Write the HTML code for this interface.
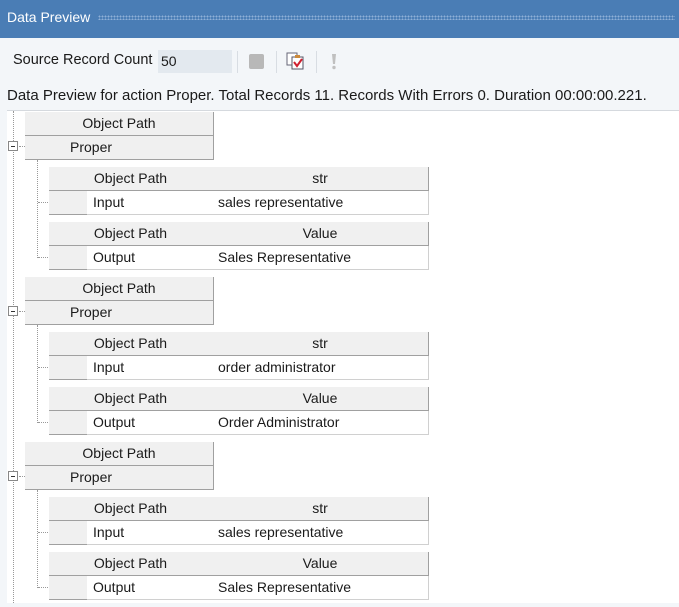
<!DOCTYPE html>
<html><head><style>
*{margin:0;padding:0;box-sizing:border-box}
body{width:679px;height:603px;overflow:hidden;background:#f3f6f9;font-family:"Segoe UI","Liberation Sans",sans-serif;font-size:14px;color:#1a1a1a;position:relative}
.a{position:absolute}
.title{left:0;top:0;width:679px;height:38px;background:#4a7db5}
.title span{position:absolute;left:7px;top:9px;color:#fff;font-size:14px}
.dots{position:absolute;left:98px;right:4px;top:15px;height:5px;background-image:radial-gradient(circle,#8fb0d6 0.8px,transparent 1px);background-size:3px 3px}
.content{left:7px;top:110px;width:672px;height:493px;background:#fff;border-top:1px solid #d5d9de}
.cell{position:absolute;background:#f0f0f0;border-right:1px solid #a0a0a0;border-bottom:1px solid #a0a0a0;font-size:14px;line-height:22px;white-space:nowrap}
.hd{text-align:center}
.w{background:#fff;border-right:1px solid #d0d0d0;border-bottom:1px solid #d0d0d0;padding-left:6px}
.vd{position:absolute;width:1px;border-left:1px dotted #999}
.hdl{position:absolute;height:1px;border-top:1px dotted #999}
.box{position:absolute;width:10px;height:10px;border:1px solid #888;background:#fff}
.box:after{content:"";position:absolute;left:2px;top:4px;width:4px;height:1px;background:#333}
</style></head><body>
<div class="a title"><span>Data Preview</span><div class="dots"></div></div>
<div class="a" style="left:13px;top:52px;font-size:14.5px">Source Record Count</div>
<div class="a" style="left:158px;top:50px;width:74px;height:23px;background:#e3e9ef;padding:3px 3px;font-size:14px">50</div>
<div class="a" style="left:237px;top:51px;width:1px;height:22px;background:#d8dde3"></div>
<div class="a" style="left:249px;top:54px;width:15px;height:15px;background:#b8b8b8;border-radius:2px"></div>
<div class="a" style="left:276px;top:51px;width:1px;height:22px;background:#d8dde3"></div>
<svg class="a" style="left:286px;top:52px" width="22" height="20"><rect x="1" y="1" width="10" height="12" fill="#fff" stroke="#667"/><rect x="6" y="5" width="11" height="12" fill="#fff" stroke="#556"/><rect x="9" y="3" width="5" height="3" fill="#cc8a3a"/><path d="M8 10l3 4 5-7" stroke="#d02030" stroke-width="2" fill="none"/></svg>
<div class="a" style="left:316px;top:51px;width:1px;height:22px;background:#d8dde3"></div>
<svg class="a" style="left:330px;top:53px" width="8" height="18"><path d="M2 1h4l-1 10h-2z" fill="#c0c0c0"/><circle cx="4" cy="14.5" r="1.7" fill="#c0c0c0"/></svg>
<div class="a" style="left:7px;top:87px;font-size:15px">Data Preview for action Proper. Total Records 11. Records With Errors 0. Duration 00:00:00.221.</div>
<div class="a content"></div>
<div class="vd" style="left:13px;top:111px;height:492px"></div>

<div class="a" style="left:0;top:112px;width:679px;height:165px">
<div class="cell hd" style="left:25px;top:0;width:189px;height:24px">Object Path</div>
<div class="cell" style="left:25px;top:24px;width:41px;height:24px"></div>
<div class="cell" style="left:65px;top:24px;width:149px;height:24px;padding-left:5px">Proper</div>
<div class="box" style="left:8px;top:29px"></div><div class="hdl" style="left:19px;top:34px;width:6px"></div>
<div class="vd" style="left:37px;top:48px;height:98px"></div>
<div class="hdl" style="left:38px;top:90px;width:10px"></div><div class="hdl" style="left:38px;top:145px;width:10px"></div>
<div class="cell hd" style="left:49px;top:55px;width:164px;height:24px">Object Path</div>
<div class="cell hd" style="left:212px;top:55px;width:217px;height:24px">str</div>
<div class="cell" style="left:49px;top:79px;width:39px;height:24px"></div>
<div class="cell w" style="left:87px;top:79px;width:126px;height:24px">Input</div>
<div class="cell w" style="left:212px;top:79px;width:217px;height:24px">sales representative</div>
<div class="cell hd" style="left:49px;top:110px;width:164px;height:24px">Object Path</div>
<div class="cell hd" style="left:212px;top:110px;width:217px;height:24px">Value</div>
<div class="cell" style="left:49px;top:134px;width:39px;height:24px"></div>
<div class="cell w" style="left:87px;top:134px;width:126px;height:24px">Output</div>
<div class="cell w" style="left:212px;top:134px;width:217px;height:24px">Sales Representative</div>
</div>

<div class="a" style="left:0;top:277px;width:679px;height:165px">
<div class="cell hd" style="left:25px;top:0;width:189px;height:24px">Object Path</div>
<div class="cell" style="left:25px;top:24px;width:41px;height:24px"></div>
<div class="cell" style="left:65px;top:24px;width:149px;height:24px;padding-left:5px">Proper</div>
<div class="box" style="left:8px;top:29px"></div><div class="hdl" style="left:19px;top:34px;width:6px"></div>
<div class="vd" style="left:37px;top:48px;height:98px"></div>
<div class="hdl" style="left:38px;top:90px;width:10px"></div><div class="hdl" style="left:38px;top:145px;width:10px"></div>
<div class="cell hd" style="left:49px;top:55px;width:164px;height:24px">Object Path</div>
<div class="cell hd" style="left:212px;top:55px;width:217px;height:24px">str</div>
<div class="cell" style="left:49px;top:79px;width:39px;height:24px"></div>
<div class="cell w" style="left:87px;top:79px;width:126px;height:24px">Input</div>
<div class="cell w" style="left:212px;top:79px;width:217px;height:24px">order administrator</div>
<div class="cell hd" style="left:49px;top:110px;width:164px;height:24px">Object Path</div>
<div class="cell hd" style="left:212px;top:110px;width:217px;height:24px">Value</div>
<div class="cell" style="left:49px;top:134px;width:39px;height:24px"></div>
<div class="cell w" style="left:87px;top:134px;width:126px;height:24px">Output</div>
<div class="cell w" style="left:212px;top:134px;width:217px;height:24px">Order Administrator</div>
</div>

<div class="a" style="left:0;top:442px;width:679px;height:165px">
<div class="cell hd" style="left:25px;top:0;width:189px;height:24px">Object Path</div>
<div class="cell" style="left:25px;top:24px;width:41px;height:24px"></div>
<div class="cell" style="left:65px;top:24px;width:149px;height:24px;padding-left:5px">Proper</div>
<div class="box" style="left:8px;top:29px"></div><div class="hdl" style="left:19px;top:34px;width:6px"></div>
<div class="vd" style="left:37px;top:48px;height:98px"></div>
<div class="hdl" style="left:38px;top:90px;width:10px"></div><div class="hdl" style="left:38px;top:145px;width:10px"></div>
<div class="cell hd" style="left:49px;top:55px;width:164px;height:24px">Object Path</div>
<div class="cell hd" style="left:212px;top:55px;width:217px;height:24px">str</div>
<div class="cell" style="left:49px;top:79px;width:39px;height:24px"></div>
<div class="cell w" style="left:87px;top:79px;width:126px;height:24px">Input</div>
<div class="cell w" style="left:212px;top:79px;width:217px;height:24px">sales representative</div>
<div class="cell hd" style="left:49px;top:110px;width:164px;height:24px">Object Path</div>
<div class="cell hd" style="left:212px;top:110px;width:217px;height:24px">Value</div>
<div class="cell" style="left:49px;top:134px;width:39px;height:24px"></div>
<div class="cell w" style="left:87px;top:134px;width:126px;height:24px">Output</div>
<div class="cell w" style="left:212px;top:134px;width:217px;height:24px">Sales Representative</div>
</div>
</body></html>
